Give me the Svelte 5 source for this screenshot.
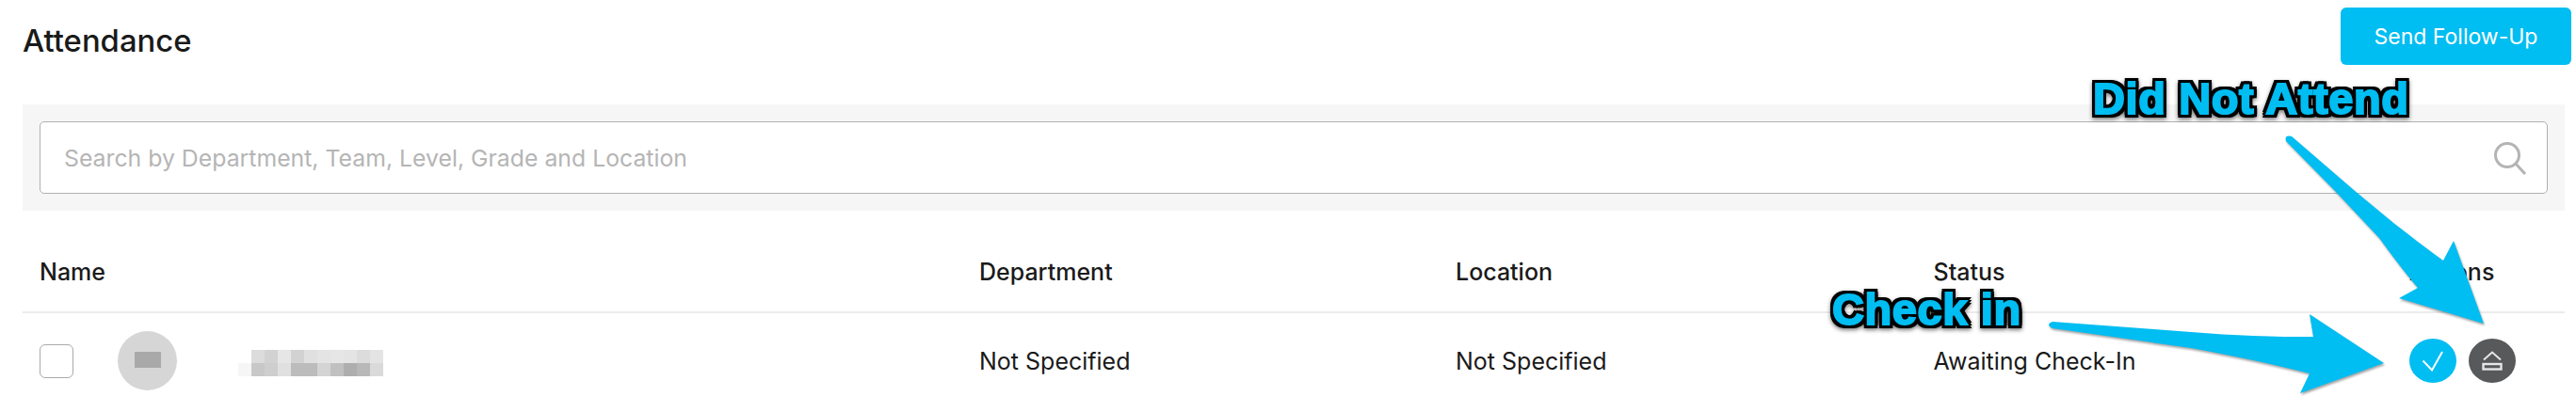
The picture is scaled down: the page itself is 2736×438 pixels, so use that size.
<script>
  const cols = ["Department", "Location", "Status"]
  const mosaic = [
    ["#fff","#dcdcdc","#d2d2d2","#e6e6e6","#d2d2d2","#e0e0e0","#e4e4e4","#e6e6e6","#e4e4e4","#dcdcdc","#e4e4e4"],
    ["#f6f6f6","#c8c8c8","#cecece","#e0e0e0","#bcbcbc","#bcbcbc","#d4d4d4","#c0c0c0","#aeaeae","#b8b8b8","#dadada"],
  ]
</script>

<div class="page">
  <header class="top">
    <h1>Attendance</h1>
    <button class="send">Send Follow-Up</button>
  </header>

  <div class="filter">
    <div class="search">
      <span class="placeholder">Search by Department, Team, Level, Grade and Location</span>
      <svg width="36" height="36" viewBox="0 0 36 36" fill="none" stroke="#b4b4b4" stroke-width="3">
        <circle cx="15" cy="15" r="12.5" />
        <path d="M24 24l10 11" />
      </svg>
    </div>
  </div>

  <div class="row head">
    <div class="cell">Name</div>
    {#each cols as c}
      <div class="cell">{c}</div>
    {/each}
    <div class="cell">Actions</div>
  </div>

  <div class="row body">
    <div class="cell who">
      <span class="check"></span>
      <span class="avatar"><span class="initials"></span></span>
      <span class="blur">
        {#each mosaic as line}
          <span class="line">
            {#each line as c}
              <i style="background: {c}"></i>
            {/each}
          </span>
        {/each}
      </span>
    </div>
    <div class="cell">Not Specified</div>
    <div class="cell">Not Specified</div>
    <div class="cell">Awaiting Check-In</div>
    <div class="cell acts">
      <span class="act in">
        <svg width="24" height="22" viewBox="0 0 24 22" fill="none" stroke="#fff" stroke-width="2">
          <path d="M1.5 10.5l9.5 10L22 1" />
        </svg>
      </span>
      <span class="act out">
        <svg width="22" height="21" viewBox="0 0 22 21" fill="none" stroke="#e6e6e6" stroke-width="2">
          <path d="M2 9.5L11 1.5l9 8" />
          <rect x="1.5" y="14" width="19" height="5.5" stroke-width="2.4" />
        </svg>
      </span>
    </div>
  </div>

  <svg class="arrows" width="2736" height="438" viewBox="0 0 2736 438">
    <path fill="#00bdf2" d="M2434 145 L2500 202 C2517 216 2533 230 2550 243 C2565 255 2580 266 2595 277 L2606 256 L2638 344 L2548 317 L2568 306 C2553 288 2540 271 2527 253 C2512 237 2497 221 2482 205 L2428 150 Q2426 143 2434 145Z" />
    <path fill="#00bdf2" d="M2180 342 L2327 353 C2350 355 2372 356 2393 357 C2415 358 2436 358 2457 358 L2453 334 L2532 386 L2443 418 L2453 397 C2433 392 2413 387 2393 383 C2371 378 2349 374 2327 370 L2180 349 Q2172 345 2180 342Z" />
  </svg>

  <span class="note dna">Did Not Attend</span>
  <span class="note ci">Check in</span>
</div>

<style>
  :global(body) {
    margin: 0;
    background: #fff;
  }

  .page {
    position: relative;
    width: 2736px;
    height: 438px;
    overflow: hidden;
    font-family: Inter, "Liberation Sans", sans-serif;
    color: #1a1a1a;
  }

  .top {
    display: flex;
    justify-content: space-between;
    align-items: flex-start;
    padding: 8px 5px 0 24px;
    height: 111px;
    box-sizing: border-box;
  }

  h1 {
    margin: 17px 0 0;
    font-size: 32.8px;
    font-weight: 500;
    line-height: 36px;
  }

  .send {
    width: 245px;
    height: 61px;
    border: 0;
    border-radius: 6px;
    background: #00bdf2;
    color: #fff;
    font: 400 23px Inter, sans-serif;
  }

  .filter {
    margin: 0 12px 0 24px;
    padding: 18px;
    background: #f6f6f6;
  }

  .search {
    display: flex;
    align-items: center;
    justify-content: space-between;
    height: 77px;
    box-sizing: border-box;
    padding: 0 21px 0 25px;
    background: #fff;
    border: 1px solid #b0b0b0;
    border-radius: 5px;
  }

  .placeholder {
    font-size: 24.8px;
    color: #b5b5b5;
  }

  .row {
    display: grid;
    grid-template-columns: 998px 506px 507.5px 505.5px 1fr;
    margin: 0 12px 0 24px;
    padding-left: 18px;
    align-items: center;
    font-size: 25px;
  }

  .head {
    height: 109px;
    box-sizing: border-box;
    padding-top: 23px;
    font-weight: 500;
    border-bottom: 2px solid #ececec;
  }

  .body {
    height: 101px;
  }

  .who {
    display: flex;
    align-items: center;
  }

  .check {
    width: 36px;
    height: 36px;
    box-sizing: border-box;
    border: 1px solid #aaa;
    border-radius: 6px;
  }

  .avatar {
    display: flex;
    margin-left: 47px;
    width: 63px;
    height: 63px;
    border-radius: 50%;
    background: #d6d6d6;
  }

  .initials {
    width: 28px;
    height: 17px;
    margin: 22px 0 0 18px;
    background: #a9a9a9;
  }

  .blur {
    display: flex;
    flex-direction: column;
    margin-left: 65px;
    margin-top: 4px;
  }

  .line {
    display: flex;
  }

  .line i {
    width: 14px;
    height: 14px;
  }

  .acts {
    display: flex;
    gap: 13px;
  }

  .act {
    display: flex;
    align-items: center;
    justify-content: center;
    width: 50px;
    height: 47px;
    border-radius: 50%;
  }

  .in {
    background: #00bdf2;
  }

  .out {
    background: #58595b;
  }

  .arrows {
    position: absolute;
    left: 0;
    top: 0;
    filter: drop-shadow(1px 2px 1px rgba(0, 0, 0, 0.35));
  }

  /* heavier letters: blue stroke on the glyph, black outline from stacked shadows */
  .note {
    position: absolute;
    font-family: "Liberation Sans", Arial, sans-serif;
    font-weight: 700;
    font-size: 47px;
    line-height: 1;
    letter-spacing: 0.6px;
    color: #00bdf2;
    -webkit-text-stroke: 2px #00bdf2;
    filter: drop-shadow(3px 0 0 #000) drop-shadow(-3px 0 0 #000) drop-shadow(0 3px 0 #000) drop-shadow(0 -3px 0 #000) drop-shadow(0 2px 2px rgba(0, 0, 0, 0.5));
  }

  .dna {
    left: 2223px;
    top: 81px;
  }

  .ci {
    left: 1946px;
    top: 305px;
  }
</style>
